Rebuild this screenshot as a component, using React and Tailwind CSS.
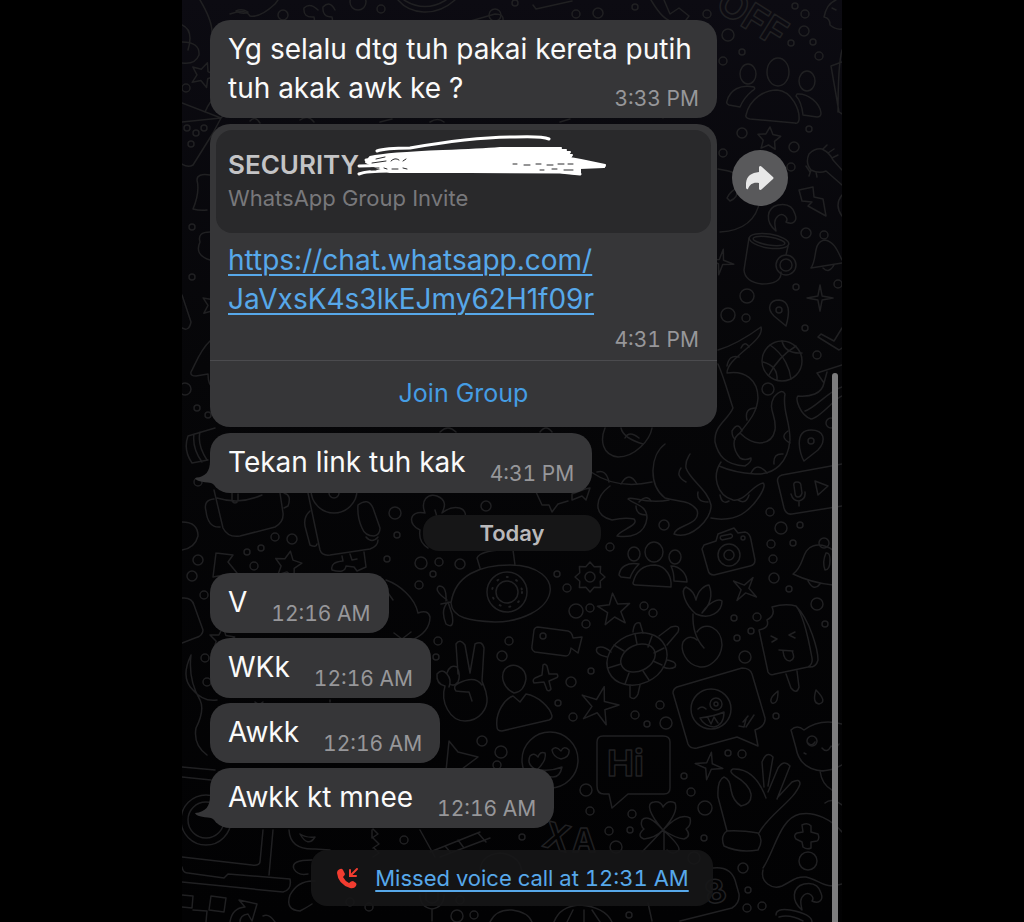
// Points of a star or gear around a centre
const star = (cx, cy, outer, inner, count, rotation = 0) => {
  const points = [];
  for (let i = 0; i < count * 2; i++) {
    const r = i % 2 === 0 ? outer : inner;
    const a = ((rotation - 90) * Math.PI) / 180 + (i * Math.PI) / count;
    points.push(`${(cx + r * Math.cos(a)).toFixed(1)},${(cy + r * Math.sin(a)).toFixed(1)}`);
  }
  return points.join(' ');
};

const stars = [
  star(769, 139, 12, 6, 5, 5),
  star(614, 610, 17, 7, 5, -5),
  star(599, 706, 20, 7, 5, 15),
  star(288, 565, 14, 7, 5, 10),
  star(203, 75, 13, 6, 5, 20),
  star(214, 305, 13, 6, 5, 15),
  star(222, 640, 13, 6, 5, 5),
  star(820, 298, 13, 3, 4, 0),
  star(721, 262, 13, 3, 4, 10),
  star(745, 589, 14, 4, 4, 35),
  star(709, 766, 14, 4, 4, 10),
];

const bubbles = [
  [283, 15, 5], [381, 9, 4], [358, 2, 8], [495, 15, 6], [515, 3, 3], [576, 14, 4], [598, 13, 5],
  [635, 7, 3], [707, 14, 4], [728, 35, 6], [742, 52, 3], [723, 61, 4], [795, 6, 3], [805, 14, 4],
  [804, 31, 5], [791, 43, 3], [813, 42, 3], [819, 56, 4], [809, 129, 3], [742, 133, 5],
  [794, 147, 5], [723, 153, 4], [791, 167, 4], [806, 233, 5], [824, 235, 4], [186, 88, 4],
  [187, 128, 3], [196, 133, 3], [204, 128, 3], [191, 144, 3], [192, 227, 3], [192, 277, 3],
  [185, 389, 6], [197, 408, 3], [208, 415, 3], [747, 296, 7], [728, 315, 7], [746, 318, 4],
  [796, 287, 3], [838, 284, 4], [805, 328, 3], [817, 355, 4], [768, 389, 6],
  [831, 423, 5], [770, 512, 4], [781, 528, 6], [800, 525, 3], [771, 544, 4], [793, 543, 3],
  [773, 559, 4], [774, 578, 5], [789, 589, 3], [664, 525, 5], [610, 547, 4], [557, 574, 3],
  [567, 588, 4], [576, 611, 7], [590, 608, 4], [586, 624, 4], [644, 606, 4], [653, 613, 4],
  [734, 618, 3], [757, 617, 4], [751, 631, 3], [737, 638, 3], [817, 604, 6], [825, 624, 3],
  [198, 482, 4], [395, 513, 6], [397, 535, 3], [486, 506, 5], [275, 537, 4], [292, 539, 5],
  [261, 548, 3], [247, 552, 3], [254, 566, 4], [198, 560, 5], [192, 576, 5], [204, 595, 4],
  [421, 563, 6], [439, 562, 4], [460, 564, 5], [387, 559, 3], [433, 574, 3], [419, 585, 4],
  [438, 641, 4], [436, 657, 3], [509, 641, 4], [502, 656, 5], [205, 658, 4], [207, 682, 4],
  [571, 682, 5], [591, 671, 3], [558, 703, 3], [573, 717, 4], [482, 741, 5], [501, 752, 6],
  [497, 765, 4], [635, 715, 4], [647, 724, 3], [660, 705, 4], [666, 723, 6], [745, 657, 6],
  [776, 716, 3], [728, 753, 3], [742, 754, 4], [684, 776, 3], [691, 792, 4],
  [705, 808, 7], [586, 790, 6], [590, 811, 4], [632, 814, 4], [609, 831, 4], [630, 830, 3],
  [616, 847, 6], [522, 837, 3], [704, 838, 3], [694, 858, 6], [743, 868, 5], [748, 890, 3],
  [747, 908, 4], [762, 906, 4], [629, 915, 3], [404, 840, 4], [457, 916, 6], [474, 915, 4],
  [369, 907, 4], [350, 902, 4], [460, 900, 4],
];

const doodles = [
  // envelope, phone handset
  'M533,5 L536,9 L572,1 M651,0 C660,15 665,20 677,24 M664,0 L670,14 L679,8 L689,16 L686,20',
  'M398,0 C410,14 435,18 455,0 M404,0 Q425,13 446,0 M318,10 Q310,2 304,8 Q303,18 314,17 Q316,25 309,28 M335,10 Q330,0 323,7 Q322,17 332,17 Q334,24 327,30',
  'M200,0 Q212,20 212,32 M182,25 Q194,30 188,50 M182,42 Q200,42 199,55 Q195,65 182,63 M230,14 Q245,8 250,16 Q260,18 275,4 L278,0',
  'M236,11 Q242,8 248,12 Q243,15 236,11 M460,24 L495,14 Q504,14 503,20 M655,85 Q664,90 663,118',
  // people
  'M746,115 C750,98 765,90 777,90 C792,91 800,110 799,120 Q798,124 795,123 L750,119 Q745,118 746,115Z M727,101 C730,90 740,84 754,87 Q756,89 752,91 C746,96 742,102 740,107 L729,105 Q726,104 727,101Z M797,94 C808,93 820,103 821,113 Q821,117 817,117 L803,115 C802,106 800,100 796,96Z',
  'M633,583 C636,570 645,565 655,565 C667,566 672,578 671,587 L636,585 Q633,585 633,583Z M619,575 C620,567 627,562 639,564 C635,568 632,572 630,578 L621,577Z M671,566 C680,566 687,574 687,582 L674,581 Q674,572 671,566Z',
  'M497,727 C495,712 505,699 513,696 L520,702 L526,694 C538,696 550,707 552,716 Q552,719 549,720 L502,731 Q497,731 497,727Z M514,693 C503,688 500,676 505,669 C513,661 526,667 526,679 Q524,692 514,693Z',
  // kite, faces on the left edge
  'M182,103 L221,118 L182,122 M205,112 Q210,100 216,98 M221,118 L213,133 L193,165 Q188,168 182,164 M221,118 L232,106',
  'M210,175 Q197,173 197,180 Q200,192 193,209 Q200,211 207,210 M210,232 Q197,232 200,242 Q194,255 210,260 M182,295 L191,322 Q189,332 182,328 M210,341 C200,350 195,365 191,372 Q190,376 196,376 L208,374 Q208,386 214,388',
  // brush, lightning, hook
  'M809,154 Q805,163 811,170 Q819,174 826,171 L842,185 M809,154 Q815,148 822,149 Q830,153 833,160 L842,170 M806,166 l4,6 M811,170 l-2,6 M816,172 l1,5 M823,149 l4,-4 M828,153 l6,-4 M832,158 l6,-3',
  'M799,190 L813,187 L814,197 L823,199 L826,216 L808,206 L812,202 L802,201Z',
  'M776,231 C765,222 766,208 778,205 C788,203 793,207 795,214 C798,222 792,225 786,222 C789,218 783,212 778,216 C773,220 775,226 776,231Z',
  'M802,910 C791,901 792,887 804,884 C814,882 819,886 821,893 C824,901 818,904 812,901 C815,897 809,891 804,895 C799,899 801,905 802,910Z',
  'M718,169 Q758,175 760,200 Q755,230 720,232 M727,198 Q731,190 738,188 Q738,198 730,201Z M842,50 Q838,65 838,112 M842,62 L831,66 L839,112 L842,114 M842,195 Q834,205 842,216',
  'M824,17 C826,6 831,2 836,0 M824,17 Q830,18 830,25 Q836,30 842,29 M832,8 l4,2',
  // mug
  'M749,238 L744,270 Q745,282 762,284 Q780,284 781,274 L781,272 M788,246 L786,255',
  // bell
  'M811,268 C818,258 812,242 825,240 C835,242 838,252 842,260 M811,268 L842,263 M823,268 Q829,274 834,265',
  'M793,574 C805,566 801,550 813,546 Q822,543 833,550 M793,574 Q812,583 833,585 M808,581 Q814,592 820,584 M826,553 Q822,562 825,570 Q830,570 830,560 Q830,552 826,553',
  // pins, ball
  'M786,326 L774,316 C766,308 770,300 779,300 C790,301 790,312 786,326Z M804,461 C800,455 793,430 811,430 C824,430 827,440 818,450Z',
  'M770,345 C785,355 790,370 791,379 M796,346 Q778,357 769,375 M782,341 Q785,354 802,353 M763,362 Q778,366 777,380',
  'M818,337 L821,334 L834,341 L842,328 M818,337 L839,350 L842,348 M817,373 L842,365 M817,373 L824,383 L827,372 M824,383 C822,394 810,397 798,396 C795,399 800,415 811,419 C820,418 835,398 842,396 M805,411 C815,408 830,390 842,387',
  // voice note
  'M842,464 L782,475 Q776,477 778,483 L784,508 Q786,515 792,514 L842,506 M794,486 Q793,482 797,482 Q801,482 801,486 L802,493 Q801,497 798,497 Q795,497 795,493Z M791,494 Q793,501 799,501 Q806,499 805,492 M799,501 V506 M815,481 L828,486 L818,495Z',
  // octopus
  'M718,350 C735,345 750,335 761,327 C764,338 745,348 732,362 Q727,368 727,373 C745,370 758,380 758,398 C757,415 745,425 740,433 C755,448 772,445 775,430 C777,415 767,410 774,397 Q782,388 785,394 C782,410 790,420 790,440 C788,462 775,475 755,474 C740,473 728,470 719,466',
  'M718,364 C725,380 730,400 733,408 C728,420 714,425 715,442 C718,455 725,465 745,466 Q752,462 751,458 Q745,461 740,458 C732,448 732,438 740,433',
  'M721,462 C712,475 716,495 733,500 C745,502 752,485 763,483 C768,486 755,505 745,512 C735,520 720,520 711,518',
  'M605,428 C600,440 602,455 618,457 C635,457 650,440 652,428 M665,444 C650,455 648,485 665,498 C680,502 690,500 697,510 C702,525 675,525 674,534 C690,540 712,520 711,505 C708,490 690,480 686,468 C685,460 688,458 690,454',
  'M591,472 C610,485 630,487 652,482 M610,486 C595,497 592,515 612,520 Q625,517 634,519 C640,525 620,530 617,536 C630,538 645,535 647,518 C647,505 635,505 628,499 C630,495 645,505 669,500',
  'M597,472 q9,-3 12,10 M621,484 q8,-14 16,0 M681,468 q-6,8 5,14 M698,492 q-2,10 10,10 M639,502 q8,-8 12,-1 M636,506 q0,9 10,9 M727,366 q2,-12 12,-9 M741,348 q4,-8 8,-1 M756,408 q-12,0 -9,12 M742,431 q-4,-10 -10,0 q0,6 3,8 M788,431 q-9,6 2,12 M783,454 q-10,-1 -9,10 M751,473 q6,-12 16,0 M720,495 q2,10 9,6 M738,500 q8,5 11,-5 M621,428 q2,10 22,16 M625,438 q4,-8 14,0',
  // camera
  'M704,545 L716,541 L718,534 L734,528 L738,533 L745,532 Q750,533 751,540 L755,560 Q755,565 750,566 L714,575 Q709,575 708,570 L702,549Z M721,536 L731,534 Q734,536 731,538 L722,540 Q719,538 721,536Z',
  // plant, apple
  'M696,614 C685,605 680,590 686,587 C692,590 695,595 696,600 C698,590 705,585 709,585 C713,595 710,605 702,613 C708,603 718,598 722,601 C722,612 710,620 696,614Z M693,614 Q692,635 704,648 M697,632 C705,620 722,628 722,645 C721,660 708,668 700,667 C686,665 680,650 683,642 C688,635 694,637 697,640',
  // ice cream
  'M772,607 Q776,615 767,620 Q770,628 759,630 L768,672 Q770,676 775,674 L808,667 Q813,664 812,658 C808,636 803,614 796,606 Q785,603 772,607Z M796,606 C810,620 818,650 818,660 Q816,668 808,667 M786,674 L791,688 Q797,695 799,687 L797,671 M771,636 l6,3 l-5,3 M795,632 l-6,3 l6,3 M779,650 L793,651 M783,651 q1,10 7,10 q6,-2 2,-10',
  'M778,691 q-10,8 -6,12 q6,2 6,-12z M816,690 q12,12 3,14 q-7,-1 -3,-14z',
  // winking message
  'M673,693 Q673,689 677,687 L742,668 Q750,668 752,674 L765,718 Q766,726 755,730 L758,746 L737,737 L697,748 Q690,749 688,744Z M698,709 q4,-4 8,0 M700,718 Q715,716 724,712 Q724,725 714,727 Q704,726 700,718Z M708,718 l3,6 l3,-7 l4,6 M739,726 l5,1 l2,-8 M746,727 l8,-12 M743,722 l5,-6',
  // turtle
  'M633,632 Q634,621 640,623 L643,633 M659,636 L671,627 Q681,624 678,632 L667,645 M607,657 Q594,654 597,648 Q603,645 611,652 M667,660 Q678,662 675,667 Q670,670 663,667 M630,685 L630,697 Q635,701 638,694 L640,685 M635,634 l2,10 M652,636 l-4,11 M664,648 l-10,5 M662,665 l-9,-4 M649,680 l-6,-9 M625,684 l4,-11 M608,668 l13,-4 M614,645 l10,6',
  // video camera, plus
  'M538,627 L568,631 Q572,632 573,638 L582,637 L578,653 L571,648 Q570,656 566,656 L535,652 Q531,650 532,646 L534,630 Q535,627 538,627Z',
  'M543,665 Q545,663 547,666 L549,674 L557,674 Q559,677 556,678 L549,681 L551,689 Q549,692 547,690 L544,682 L534,683 Q532,680 535,678 L542,675Z M802,825 Q808,822 811,826 L811,832 L818,834 Q820,839 817,841 L811,842 L811,848 Q807,850 803,847 L802,842 L796,839 Q793,835 797,833 L803,832Z',
  // peace hand
  'M445,686 C440,702 450,721 465,721 C480,721 488,708 487,698 C486,688 483,685 482,681 L484,648 Q482,640 475,644 L470,673 L465,645 Q460,638 456,644 L458,674 M445,686 Q436,684 437,674 Q442,668 447,674 Q452,680 449,687 M447,673 Q450,664 457,667 Q461,675 458,682 Q454,687 450,684 M482,685 Q475,675 459,683 Q452,686 456,691 Q465,692 469,692 L472,701',
  // submarine
  'M451,603 C455,575 480,565 510,565 C540,565 552,580 550,592 C547,610 520,622 495,622 C470,621 452,618 451,603Z M480,568 L477,558 Q480,551 502,550 M513,550 L515,565 M447,600 Q433,590 439,586 Q447,586 446,601 M448,602 Q440,610 446,624 Q455,630 452,614Z M441,604 l10,-2',
  // faces
  'M530,756 Q526,765 537,770 Q547,760 545,753 Q540,751 538,757 Q534,752 530,756Z M552,750 Q553,757 561,759 Q570,757 569,750 Q564,745 561,751 Q555,745 552,750Z M542,770 Q552,771 562,767 Q560,777 553,777 Q545,777 542,770Z',
  'M449,741 L458,752 L478,757 L462,769 L446,771Z',
  'M603,736 H663 Q670,736 670,742 V788 Q670,794 664,794 H628 L612,808 L609,794 H604 Q597,794 597,786 V742 Q597,736 603,736Z',
  // clover
  'M663,830 C650,815 645,803 654,802 Q661,801 663,807 Q668,799 675,803 Q679,812 663,830 Q680,812 690,818 Q692,825 686,829 Q692,836 684,839 Q675,838 663,830 Q680,845 679,850 Q673,856 667,850 M663,830 Q648,813 642,820 Q640,826 644,829 Q636,836 644,839 Q655,838 663,830 L642,852 M664,830 V850',
  // ok hand
  'M727,831 L718,797 Q717,780 724,777 Q730,779 731,790 Q733,801 741,806 Q752,804 751,794 Q749,784 735,776 Q728,771 733,769 Q755,768 766,798 M764,787 L762,762 Q767,750 773,757 L768,786 M768,792 L778,768 Q784,759 790,766 L777,799 M778,797 L792,782 Q800,778 800,784 C795,800 768,815 759,833 M727,831 Q740,830 758,833 Q764,840 758,850 Q738,853 724,846 Q720,836 727,831Z',
  // gamepad, bear
  'M763,870 C760,882 772,890 782,886 C792,881 797,876 806,877 C820,880 825,890 842,884 M763,868 C775,850 780,818 800,814 C815,811 832,820 842,832',
  'M796,748 L791,730 Q797,724 804,730 Q820,718 842,724 M796,748 Q800,770 824,771 M842,765 Q832,771 820,771 Q822,785 832,790 M825,803 Q832,797 842,805 M808,743 q4,4 7,-1 M822,748 q5,6 9,-2 q5,4 8,-2 M804,753 l2,1',
  'M713,868 Q730,866 735,880 L739,894 Q740,903 732,908 L680,921 M648,903 L652,921 M776,915 Q776,908 790,910 Q812,914 812,922 M779,917 Q790,914 803,921',
  // items behind the left column
  'M214,490 L223,528 Q228,538 240,536 L275,527 Q284,522 283,513 L280,493 M217,498 Q240,505 262,495 M232,493 v8 q3,4 6,0 v-7 M214,499 Q203,500 206,511 Q208,528 220,527 M284,493 Q292,495 288,506 L284,508',
  'M308,493 L320,550 Q322,556 330,555 L370,549 Q378,546 378,540 M358,505 Q368,497 373,508 L380,528 Q380,535 374,536 Q365,536 362,528 Q357,517 358,505Z M366,537 Q372,544 378,537 M310,511 Q302,518 306,530 L310,545 Q316,548 317,544 M342,556 L343,561 Q330,562 332,570 Q345,574 346,566 L354,567 L357,571 L366,567 L364,552 M350,554 l2,6 l5,-1',
  'M420,530 C408,525 408,510 425,513 C420,500 428,493 437,496 C447,500 445,507 442,513 C455,503 468,508 465,518 M437,517 l-2,-7 M420,530 Q418,542 428,548',
  'M216,553 L233,555 L228,562 L237,573 L231,577 M216,553 L213,577 L224,575 M182,522 Q198,522 198,536 Q195,548 182,550 M192,463 Q183,450 188,436 L215,428 M200,432 Q197,445 207,460 M194,434 Q192,448 202,462 M192,463 L208,460',
  'M386,580 C400,585 415,598 418,613 Q428,609 430,617 Q430,632 412,640 M394,633 L402,639 L411,632 M386,590 l7,10 M182,598 Q192,597 194,605 L203,630 Q203,636 195,638 L182,643',
  'M191,655 Q180,678 193,690 Q203,702 217,700 M191,655 Q188,680 200,700 Q205,710 196,728 Q193,745 207,755 M182,767 L215,770 M182,777 L211,780 M536,492 L542,505 L549,505 L552,512 L558,504 L568,501 M572,494 L585,489 L590,488 L586,500 L582,496 L572,500Z',
  // laptop
  'M263,830 L260,862 Q259,866 252,865 L182,857 M273,830 L269,875 M182,867 Q183,873 188,873 L224,878 L228,874 L290,879 Q292,890 283,892 L182,882',
  'M182,895 L193,896 L192,908 L182,907 M211,896 L226,898 L224,912 L209,910Z M193,910 L207,911 L206,922 M230,922 Q232,908 245,907 L239,900 L257,904 L252,921 L248,914 Q240,915 240,922 M263,916 q6,-3 12,6',
  'M289,830 Q290,850 315,849 L330,850 M300,834 Q306,838 315,837 Q308,848 300,834 M312,860 Q290,860 294,869 Q298,876 308,874 M315,881 Q298,880 290,895 Q285,910 300,911 Q306,908 312,904 M372,830 l0,8 l6,-4 l-5,-5 M373,838 l6,6 l-6,4 M374,848 l5,5 l-6,4 M420,830 L435,857 M430,852 L480,832 M440,857 L490,838 M445,846 l6,7 M458,840 l6,8 M478,833 l8,9',
  // behind the call notice
  'M480,872 Q480,855 500,853 Q520,855 522,872 M380,880 Q388,868 402,872 Q412,882 406,892 M420,895 q0,12 12,14 q12,-2 12,-14 M426,890 v10 q6,6 12,0 v-10 M432,909 v12 M490,922 Q496,909 512,910 Q528,912 532,922 M554,922 Q560,906 580,905 Q605,907 612,922 M567,922 l6,-12 M584,910 v12 M600,922 l-8,-12',
  'M300,120 q8,-6 14,2 M380,122 l12,-3 M250,121 q5,-6 10,2 M560,122 l10,-3 M430,122 q8,-5 14,0 M540,432 q6,-8 12,0 M440,432 q8,-8 16,0 M330,702 v-2 M255,702 q4,4 8,0',
];

function Wallpaper() {
  return (
    <svg
      aria-hidden="true"
      className="absolute inset-0 w-full h-full text-[#202022]"
      viewBox="182 0 660 922"
      preserveAspectRatio="xMidYMin slice"
      fill="none"
      stroke="currentColor"
      strokeWidth="1.5"
      strokeLinejoin="round"
      strokeLinecap="round"
    >
      {bubbles.map(([x, y, r], i) => (
        <circle key={i} cx={x} cy={y} r={r} />
      ))}
      {stars.map((points, i) => (
        <polygon key={i} points={points} />
      ))}
      {doodles.map((d, i) => (
        <path key={i} d={d} />
      ))}
      <ellipse cx="778" cy="72" rx="11" ry="14" />
      <ellipse cx="748" cy="74" rx="8" ry="10" />
      <ellipse cx="807" cy="81" rx="8" ry="10" />
      <ellipse cx="654" cy="552" rx="9" ry="10" />
      <ellipse cx="634" cy="554" rx="6" ry="7" />
      <ellipse cx="675" cy="557" rx="6" ry="7" />
      <ellipse cx="769" cy="241" rx="20" ry="7" transform="rotate(9 769 241)" />
      <ellipse cx="769" cy="241" rx="16" ry="4" transform="rotate(9 769 241)" />
      <circle cx="786" cy="265" r="10" />
      <circle cx="786" cy="265" r="6" />
      <circle cx="779" cy="310" r="3" />
      <circle cx="811" cy="441" r="3" />
      <circle cx="782" cy="361" r="20" />
      <circle cx="729" cy="555" r="11" />
      <circle cx="729" cy="555" r="5" />
      <circle cx="743" cy="538" r="2" />
      <circle cx="824" cy="543" r="5" />
      <polygon points={star(590, 577, 15, 11, 8)} />
      <circle cx="590" cy="577" r="5" />
      <ellipse cx="637" cy="659" rx="31" ry="25" transform="rotate(-25 637 659)" />
      <ellipse cx="638" cy="658" rx="18" ry="13" transform="rotate(-25 638 658)" />
      <circle cx="543" cy="636" r="3" />
      <circle cx="711" cy="709" r="20" />
      <circle cx="716" cy="704" r="6" />
      <circle cx="716" cy="704" r="2" />
      <circle cx="550" cy="760" r="28" />
      <circle cx="507" cy="592" r="20" />
      <circle cx="507" cy="592" r="11" />
      <circle cx="507" cy="592" r="15" strokeDasharray="1 9" strokeWidth="2" />
      <circle cx="334" cy="490" r="23" />
      <circle cx="334" cy="493" r="5" />
      <circle cx="808" cy="861" r="9" />
      <circle cx="812" cy="741" r="5" />
      <circle cx="206" cy="820" r="25" />
      <circle cx="206" cy="820" r="18" />
      <g className="font-[Inter,sans-serif] font-bold">
        <text x="607" y="776" fontSize="36">Hi</text>
        <text x="714" y="9" fontSize="38" transform="rotate(32 714 9)">OFF</text>
        <text x="541" y="846" fontSize="36" transform="rotate(14 541 846)">X</text>
        <text x="572" y="852" fontSize="32">A</text>
        <text x="708" y="905" fontSize="32" transform="rotate(-14 708 905)">8</text>
      </g>
    </svg>
  );
}

function Time({ children }) {
  return <time className="text-[21px] leading-6 tabular-nums text-[#97979a] whitespace-nowrap">{children}</time>;
}

function Message({ text, time, tail }) {
  return (
    <li className="relative flex items-end gap-6 h-[60px] px-[18px] rounded-[20px] bg-[#363638]">
      {tail && (
        <svg className="absolute -left-[15px] bottom-0.5 w-5 h-[30px] text-[#363638]" viewBox="0 0 20 30" fill="currentColor" aria-hidden="true">
          <path d="M15,0 C15,10 11,16 0,17 C1,20 7,21 16,22 L20,24 V0Z" />
        </svg>
      )}
      <p className="self-start pt-2.5 text-[28px] leading-[39px] text-[#fafafa] whitespace-nowrap">{text}</p>
      <span className="pb-[7px] flex">
        <Time>{time}</Time>
      </span>
    </li>
  );
}

// White marker strokes over the group name
function Scribble() {
  return (
    <svg className="absolute left-[141px] top-[5px] w-[250px] h-12" viewBox="357 136 250 48" fill="none" stroke="#fff" strokeLinecap="round" aria-hidden="true">
      <path strokeWidth="3" d="M377,152 Q385,149 410,149 C450,142 485,138 515,138 Q542,137 549,140" />
      <path fill="#fff" strokeWidth="2" strokeLinejoin="round" d="M370,158 C400,152 450,153 500,149 H561 L560,151 H566 L565,153 H570 L568,156 H572 L570,159 L581,161 L605,166 L604,168 L580,169 L580,175 L560,173 H390 L378,169 L366,163Z" />
      <path strokeWidth="3" d="M359,167 L400,166 M359,175 Q366,172 390,172 L560,173 L580,175 M366,161 L400,159 M560,163 L604,167" />
      <path stroke="#2a2a2c" strokeWidth="1" d="M372,164 l14,-2 M376,160 l9,-2 M391,162 q4,-4 8,-1 M403,162 l3,-2 M371,169 h8 M371,171 h5 M384,169 l3,1 M392,170 h6 M403,169 l4,1 M513,165 h4 M524,166 h6 M536,165 h5 M547,166 h6 M558,165 h6 M540,171 h4 M552,170 h5 M564,171 h9 M568,165 h5" />
    </svg>
  );
}

export default function App() {
  return (
    <div className="min-h-screen bg-black flex justify-center font-[Inter,'Liberation_Sans',sans-serif]">
      <main className="relative w-full max-w-[660px] overflow-hidden bg-linear-to-b from-[#0c0b12] via-[#060608] via-40% to-[#020203]">
        <Wallpaper />

        <div className="relative px-7 pt-5 pb-3">
          <ul className="flex flex-col items-start gap-1.5">
            <li className="w-full max-w-[507px] px-[18px] py-2.5 rounded-[20px] bg-[#363638]">
              <p className="text-[28px] leading-[39px] text-[#fafafa]">
                Yg selalu dtg tuh pakai kereta putih
                <br />
                tuh akak awk ke ?
                <span className="float-right mt-[18px] -mb-2 flex">
                  <Time>3:33 PM</Time>
                </span>
              </p>
            </li>

            {/* Group invite */}
            <li className="w-full flex items-start gap-[15px]">
              <article className="w-full max-w-[507px] rounded-[20px] bg-[#363638]">
                <div className="p-1.5">
                  <header className="relative h-[103px] px-3 pt-[18px] rounded-2xl bg-[#29292b]">
                    <h2 className="text-[26px] leading-[34px] font-semibold text-[#c4c4c6]">SECURITY</h2>
                    <p className="text-[22px] leading-8 text-[#78787b]">WhatsApp Group Invite</p>
                    <Scribble />
                  </header>
                </div>
                <div className="px-[18px] pt-0.5">
                  <a
                    href="https://chat.whatsapp.com/JaVxsK4s3lkEJmy62H1f09r"
                    className="block text-[28px] leading-[39px] text-[#57a8ea] underline decoration-2 underline-offset-4"
                  >
                    https://chat.whatsapp.com/
                    <br />
                    JaVxsK4s3lkEJmy62H1f09r
                  </a>
                  <p className="flex justify-end pt-[9px] pb-2">
                    <Time>4:31 PM</Time>
                  </p>
                </div>
                <button className="w-full h-[67px] border-t border-[#4b4b4e] text-[25px] text-[#459de4]">
                  Join Group
                </button>
              </article>
              <button aria-label="Forward" className="mt-[26px] w-14 h-14 shrink-0 rounded-full bg-[#59595b] flex items-center justify-center">
                <svg className="w-7 h-7 text-[#e8e8e8]" viewBox="0 0 28 28" fill="currentColor" aria-hidden="true">
                  <path d="M0,24 C-1,13 4,9 13,8 V3 Q14,1 16,3 L27,13 Q28,14 27,15 L16,25 Q14,27 13,25 V19 C7,18 4,20 2,25 Q1,26 0,24Z" />
                </svg>
              </button>
            </li>

            <Message text="Tekan link tuh kak" time="4:31 PM" tail />
          </ul>

          <div className="mt-[22px] mx-auto w-[178px] h-9 rounded-2xl bg-[#161617] flex items-center justify-center">
            <h3 className="text-[22px] leading-7 font-semibold text-[#b9b9bb]">Today</h3>
          </div>

          <ul className="mt-[22px] flex flex-col items-start gap-[5px]">
            <Message text="V" time="12:16 AM" />
            <Message text="WKk" time="12:16 AM" />
            <Message text="Awkk" time="12:16 AM" />
            <Message text="Awkk kt mnee" time="12:16 AM" tail />
          </ul>

          <div className="mt-[22px] mx-auto w-fit h-14 px-6 rounded-2xl bg-[#161617]/90 flex items-center gap-4">
            <svg className="w-6 h-6 text-[#f23c30]" viewBox="0 0 24 24" aria-hidden="true">
              <path fill="currentColor" d="M2,7 Q2,4 5,3 Q7,2 8,4 L10,8 Q10,9 8,11 Q10,15 14,17 Q16,15 18,15 L21,17 Q22,18 21,20 Q19,23 15,22 Q3,18 2,7Z" />
              <path fill="none" stroke="currentColor" strokeWidth="2" strokeLinecap="round" d="M22,3 L15,10 M15,4 V10 H21" />
            </svg>
            <a href="#call" className="text-[22px] leading-7 tabular-nums text-[#57a8ea] underline decoration-2 underline-offset-4">
              Missed voice call at 12:31 AM
            </a>
          </div>
        </div>

        {/* Scroll thumb */}
        <div className="absolute right-1 top-[373px] bottom-0 w-1.5 rounded-t-full bg-[#7d7d7e]" />
      </main>
    </div>
  );
}
